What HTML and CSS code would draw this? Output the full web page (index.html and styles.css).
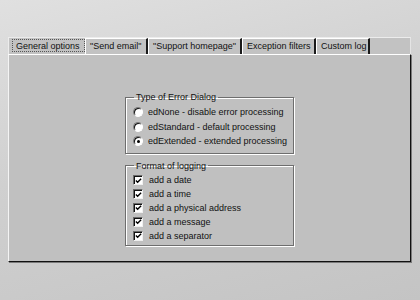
FILE: index.html
```html
<!DOCTYPE html>
<html>
<head>
<meta charset="utf-8">
<link rel="stylesheet" href="styles.css">
</head>
<body>
<div class="screen">
  <div class="tabctl">
    <div class="tabs">
      <div class="tab sel"><span class="focus">General options</span></div>
      <div class="tab t2">"Send email"</div>
      <div class="tab t3">"Support homepage"</div>
      <div class="tab t4">Exception filters</div>
      <div class="tab t5">Custom log</div>
    </div>
    <div class="page">
      <fieldset class="group g1">
        <legend>Type of Error Dialog</legend>
        <div class="row"><span class="radio"></span><span class="lbl">edNone - disable error processing</span></div>
        <div class="row"><span class="radio"></span><span class="lbl">edStandard - default processing</span></div>
        <div class="row"><span class="radio on"></span><span class="lbl">edExtended - extended processing</span></div>
      </fieldset>
      <fieldset class="group g2">
        <legend>Format of logging</legend>
        <div class="crow"><span class="check"><svg width="8" height="8" viewBox="0 0 8 8"><path d="M1 3.5 L3 5.5 L7 1.5" fill="none" stroke="#000" stroke-width="1.6"/></svg></span><span class="lbl">add a date</span></div>
        <div class="crow"><span class="check"><svg width="8" height="8" viewBox="0 0 8 8"><path d="M1 3.5 L3 5.5 L7 1.5" fill="none" stroke="#000" stroke-width="1.6"/></svg></span><span class="lbl">add a time</span></div>
        <div class="crow"><span class="check"><svg width="8" height="8" viewBox="0 0 8 8"><path d="M1 3.5 L3 5.5 L7 1.5" fill="none" stroke="#000" stroke-width="1.6"/></svg></span><span class="lbl">add a physical address</span></div>
        <div class="crow"><span class="check"><svg width="8" height="8" viewBox="0 0 8 8"><path d="M1 3.5 L3 5.5 L7 1.5" fill="none" stroke="#000" stroke-width="1.6"/></svg></span><span class="lbl">add a message</span></div>
        <div class="crow"><span class="check"><svg width="8" height="8" viewBox="0 0 8 8"><path d="M1 3.5 L3 5.5 L7 1.5" fill="none" stroke="#000" stroke-width="1.6"/></svg></span><span class="lbl">add a separator</span></div>
      </fieldset>
    </div>
  </div>
</div>
</body>
</html>
```

FILE: styles.css
```css
html, body {
  margin: 0;
  padding: 0;
}
body {
  width: 420px;
  height: 300px;
  overflow: hidden;
  font-family: "Liberation Sans", Arial, sans-serif;
  font-size: 9px;
  color: #111;
}
.screen {
  width: 420px;
  height: 300px;
  background: linear-gradient(165deg, #e0e0e0 0%, #d0d0d0 45%, #c4c4c4 100%);
  padding: 37px 0 0 8px;
  box-sizing: border-box;
}
.tabctl {
  width: 403px;
}
.tabs {
  display: flex;
  height: 17px;
  box-sizing: border-box;
  background: #c2c2c2;
  border-top: 1px solid #ececec;
  border-left: 1px solid #ececec;
  border-right: 1px solid #e4e4e4;
  padding-left: 2px;
}
.tab {
  box-sizing: border-box;
  height: 16px;
  line-height: 14px;
  border-top: 1px solid #fff;
  border-left: 1px solid #fff;
  border-right: 2px solid #1a1a1a;
  padding: 0 0 0 4px;
  white-space: nowrap;
  overflow: hidden;
  background: #c2c2c2;
}
.tab.sel {
  border: none;
  width: 74px;
  padding: 1px 0 0 1px;
}
.focus {
  display: block;
  height: 13px;
  line-height: 12px;
  border: 1px dotted #555;
  padding-left: 3px;
  box-sizing: border-box;
}
.t2 { width: 63px; }
.t3 { width: 94px; }
.t4 { width: 74px; }
.t5 { width: 54px; }
.page {
  height: 208px;
  box-sizing: border-box;
  background: #c0c0c0;
  border-top: 1px solid #fff;
  border-left: 1px solid #f4f4f4;
  border-right: 1px solid #111;
  border-bottom: 1px solid #111;
  box-shadow: 1px 1px 0 #7a7a7a;
  display: flex;
  flex-direction: column;
  align-items: center;
  padding-top: 36px;
}
.group {
  margin: 0;
  width: 169px;
  min-width: 0;
  box-sizing: border-box;
  border: 1px solid #6e6e6e;
  box-shadow: 1px 1px 0 #fff, inset 1px 1px 0 #fff;
  padding: 0 0 0 7px;
}
.group legend {
  margin-left: 1px;
  padding: 0 2px;
  line-height: 12px;
}
.g1 {
  padding-top: 2px;
  padding-bottom: 4px;
}
.g2 {
  margin-top: 6px;
  padding-top: 2px;
  padding-bottom: 3px;
}
.row {
  display: flex;
  align-items: center;
  height: 14.5px;
}
.crow {
  display: flex;
  align-items: center;
  height: 13.8px;
}
.radio {
  position: relative;
  width: 10px;
  height: 10px;
  box-sizing: border-box;
  border-radius: 50%;
  background: #fff;
  border: 1px solid;
  border-color: #7a7a7a #fff #fff #7a7a7a;
  box-shadow: inset 1px 1px 0 #111;
  margin-right: 5px;
  flex: none;
}
.radio.on::after {
  content: "";
  position: absolute;
  left: 2.5px;
  top: 2.5px;
  width: 3.5px;
  height: 3.5px;
  border-radius: 50%;
  background: #000;
}
.check {
  width: 10px;
  height: 10px;
  box-sizing: border-box;
  background: #fff;
  border: 1px solid;
  border-color: #6a6a6a #f0f0f0 #f0f0f0 #6a6a6a;
  box-shadow: inset 1px 1px 0 #111;
  margin-right: 6px;
  flex: none;
  display: flex;
  align-items: center;
  justify-content: center;
  padding: 1px 0 0 1px;
}
.check svg {
  display: block;
}
.lbl {
  white-space: nowrap;
}
```
